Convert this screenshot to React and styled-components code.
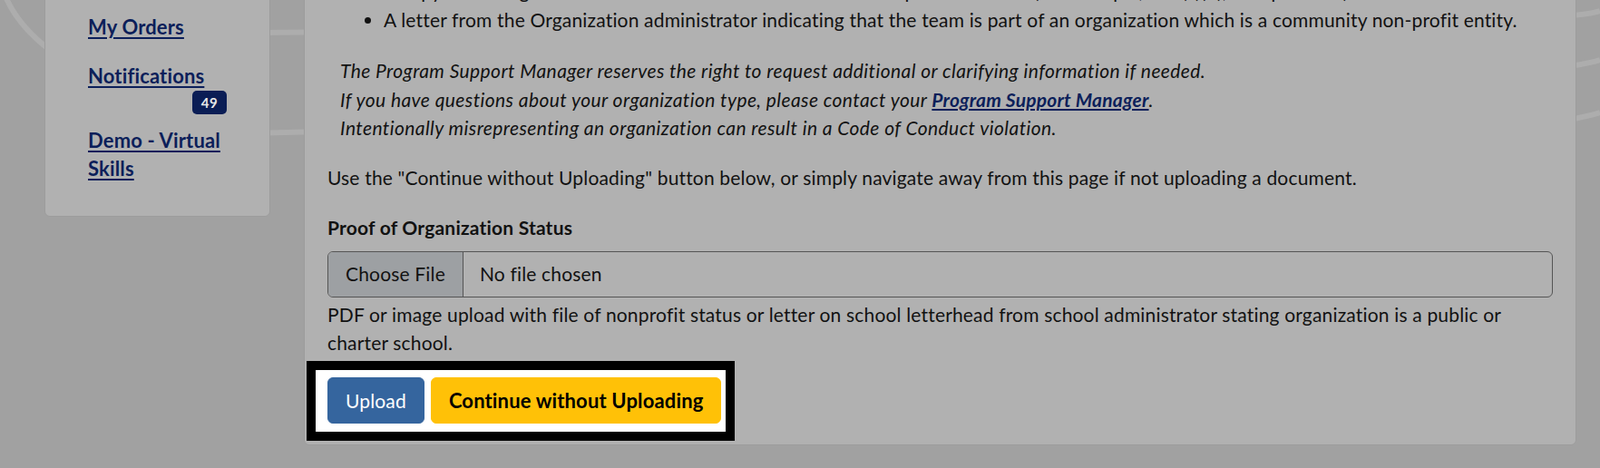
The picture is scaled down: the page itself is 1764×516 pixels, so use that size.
import React from 'react';
import styled, { createGlobalStyle } from 'styled-components';

const swooshes = encodeURIComponent(
  `<svg xmlns="http://www.w3.org/2000/svg" width="1764" height="516" viewBox="0 0 1764 516">
    <g fill="none" stroke="#ffffff" stroke-opacity="0.13" stroke-width="6">
      <path d="M6 -4 Q 22 34 70 66"/>
      <path d="M150 38 C 700 28, 1700 36, 1764 12"/>
      <path d="M150 150 C 700 138, 1650 100, 1764 66"/>
      <path d="M700 300 C 1200 200, 1680 150, 1764 124"/>
    </g>
  </svg>`
);

const GlobalStyle = createGlobalStyle`
  html, body {
    margin: 0;
    padding: 0;
    height: 100%;
    overflow: hidden;
  }
  body {
    background-color: #a1a1a1;
    background-image: url("data:image/svg+xml,${swooshes}");
    background-repeat: no-repeat;
    font-family: Lato, 'Noto Sans', sans-serif;
    font-size: 21px;
    line-height: 1.5;
    letter-spacing: 0.17px;
    color: #121212;
  }
  * {
    box-sizing: border-box;
  }
`;

const Page = styled.div`
  display: flex;
  align-items: flex-start;
  gap: 37px;
  margin-top: -40px;
  padding: 0 26px 0 49px;
`;

const Sidebar = styled.nav`
  flex: 0 0 249px;
  background: #b1b1b1;
  border: 1px solid #9c9c9c;
  border-radius: 6px;
  padding: 53px 47px 37px;
`;

const NavItem = styled.div`
  display: flex;
  flex-direction: column;
  margin-bottom: ${(p) => p.$space || 0}px;
`;

const NavLink = styled.a`
  color: #0c1f5a;
  font-weight: 700;
  font-size: 22px;
  line-height: 31px;
  letter-spacing: 0.15px;
  text-decoration: underline;
  text-decoration-thickness: 2px;
  text-underline-offset: 3px;
  cursor: pointer;
`;

const Badge = styled.span`
  align-self: flex-end;
  min-width: 38px;
  height: 26px;
  margin-top: 1px;
  padding: 0 8px;
  border-radius: 5px;
  background: #0a1d55;
  color: #e8e8e8;
  font-size: 15px;
  font-weight: 700;
  line-height: 26px;
  letter-spacing: 0.5px;
  text-align: center;
`;

const Card = styled.main`
  flex: 1;
  background: #b1b1b1;
  border: 1px solid #9c9c9c;
  border-radius: 6px;
  padding: 13px 25px 4px;
`;

const Notes = styled.div`
  padding-left: 14px;
`;

const BulletList = styled.ul`
  margin: 0 0 25px;
  padding-left: 48px;
`;

const Italic = styled.p`
  margin: 0 0 23px;
  font-style: italic;
  letter-spacing: 0.42px;
`;

const InlineLink = styled.a`
  color: #0c1f5a;
  font-weight: 700;
  letter-spacing: 0.2px;
  text-decoration: underline;
  text-decoration-thickness: 2px;
  text-underline-offset: 2px;
`;

const Text = styled.p`
  margin: 0 0 24px;
`;

const Label = styled.label`
  display: block;
  font-weight: 700;
  letter-spacing: 0.2px;
  margin-bottom: 10px;
`;

const FileField = styled.div`
  display: flex;
  align-items: stretch;
  height: 51px;
  border: 1px solid #555;
  border-radius: 6px;
  overflow: hidden;
`;

const FileButton = styled.span`
  display: flex;
  align-items: center;
  padding: 0 19px;
  background: #9da0a3;
  border-right: 1px solid #555;
`;

const FileName = styled.span`
  display: flex;
  align-items: center;
  padding: 0 18px;
`;

const Help = styled.div`
  margin-top: 3px;
`;

const Spotlight = styled.div`
  display: flex;
  gap: 7px;
  width: fit-content;
  margin: 4px 0 0 -23px;
  border: 10px solid #000;
  background: #fff;
  padding: 8px 5px 9px 13px;
`;

const Button = styled.button`
  height: 51px;
  padding: 0 19px;
  border: 1px solid ${(p) => (p.$variant === 'warning' ? '#ffc107' : '#35659e')};
  border-radius: 6px;
  background: ${(p) => (p.$variant === 'warning' ? '#ffc107' : '#35659e')};
  color: ${(p) => (p.$variant === 'warning' ? '#000' : '#fff')};
  font-family: Lato, 'Noto Sans', sans-serif;
  font-size: ${(p) => (p.$variant === 'warning' ? 22 : 21)}px;
  font-weight: ${(p) => (p.$variant === 'warning' ? 700 : 400)};
  letter-spacing: 0.15px;
  cursor: pointer;
`;

const App = () => {
  return (
    <>
      <GlobalStyle />
      <Page>
        <Sidebar>
          <NavItem $space={23}>
            <NavLink>My Orders</NavLink>
          </NavItem>
          <NavItem $space={13}>
            <NavLink>Notifications</NavLink>
            <Badge>49</Badge>
          </NavItem>
          <NavItem>
            <NavLink>Demo - Virtual Skills</NavLink>
          </NavItem>
        </Sidebar>
        <Card>
          <Notes>
            <BulletList>
              <li>
                A copy of the organization's IRS determination letter or other proof of status (for example, 501(c)(3), or equivalent).
              </li>
              <li>
                A letter from the Organization administrator indicating that the team is part of an organization which is a community non-profit entity.
              </li>
            </BulletList>
            <Italic>
              The Program Support Manager reserves the right to request additional or clarifying information if needed.
              <br />
              If you have questions about your organization type, please contact your{' '}
              <InlineLink>Program Support Manager</InlineLink>.
              <br />
              Intentionally misrepresenting an organization can result in a Code of Conduct violation.
            </Italic>
          </Notes>
          <Text>
            Use the "Continue without Uploading" button below, or simply navigate away from this page if not uploading a document.
          </Text>
          <Label>Proof of Organization Status</Label>
          <FileField>
            <FileButton>Choose File</FileButton>
            <FileName>No file chosen</FileName>
          </FileField>
          <Help>
            PDF or image upload with file of nonprofit status or letter on school letterhead from school administrator stating organization is a public or charter school.
          </Help>
          <Spotlight>
            <Button>Upload</Button>
            <Button $variant="warning">Continue without Uploading</Button>
          </Spotlight>
        </Card>
      </Page>
    </>
  );
};

export default App;
